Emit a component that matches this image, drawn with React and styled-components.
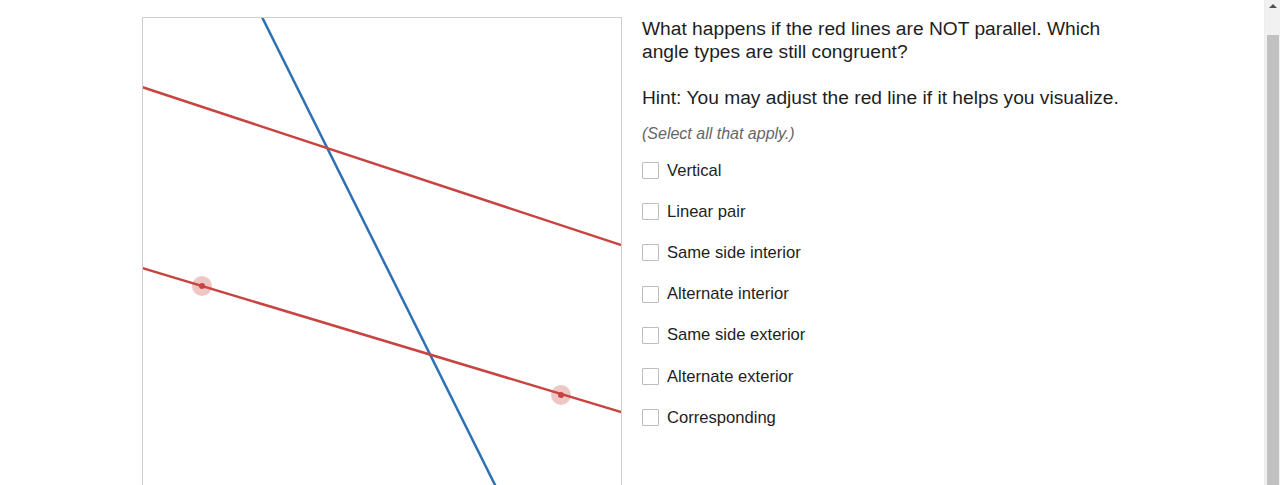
import React from 'react';
import styled, { createGlobalStyle } from 'styled-components';

const GlobalStyle = createGlobalStyle`
    html, body {
        margin: 0;
        padding: 0;
        background: #fff;
        overflow: hidden;
        height: 485px;
    }
    body {
        font-family: "Liberation Sans", Arial, sans-serif;
        color: #222;
    }
`;

const Page = styled.div`
    width: 1264px;
    height: 485px;
    overflow: hidden;
`;

const Container = styled.div`
    width: 980px;
    margin: 0 auto;
    padding-top: 17px;
    display: flex;
    align-items: flex-start;
    gap: 20px;
`;

const GraphBox = styled.div`
    width: 478px;
    height: 478px;
    border: 1px solid #cfcfcf;
    flex: none;
    overflow: hidden;

    svg {
        display: block;
    }
`;

const Side = styled.div`
    flex: 1;
`;

const Question = styled.p`
    margin: 0;
    font-size: 19.2px;
    line-height: 23px;
    color: #1e1e1e;
`;

const Hint = styled(Question)`
    margin-top: 23px;
`;

const Note = styled.p`
    margin: 15px 0 0;
    font-size: 16px;
    line-height: 20px;
    font-style: italic;
    color: #666;
`;

const Options = styled.ul`
    list-style: none;
    margin: 6px 0 0;
    padding: 0;
`;

const Option = styled.li`
    height: 41.2px;
    display: flex;
    align-items: center;
    gap: 8px;
    font-size: 16.6px;
    color: #1e1e1e;
`;

const Box = styled.span`
    width: 15px;
    height: 15px;
    border: 1px solid #bdbdbd;
    border-radius: 1px;
    background: #fff;
    flex: none;
`;

const Scrollbar = styled.div`
    position: fixed;
    top: 0;
    right: 0;
    width: 16px;
    height: 485px;
    background: #f1f1f1;
    border-left: 1px solid #ececec;
    box-sizing: border-box;
`;

const Arrow = styled.div`
    width: 0;
    height: 0;
    margin: 4px auto 0;
    border-left: 4px solid transparent;
    border-right: 4px solid transparent;
    border-bottom: 4px solid #505050;
`;

const Thumb = styled.div`
    position: absolute;
    top: 35px;
    left: 2px;
    width: 12px;
    bottom: 0;
    background: #c1c1c1;
`;

const RED = '#c74440';
const BLUE = '#2d70b3';

const Graph = () => (
    <GraphBox>
        <svg width="478" height="478" viewBox="0 0 478 478">
            <line x1="118.5" y1="-2" x2="359" y2="481" stroke={BLUE} strokeWidth="2.5" />
            <line x1="-2" y1="68.7" x2="480" y2="227.7" stroke={RED} strokeWidth="2.5" />
            <line x1="-2" y1="249.7" x2="480" y2="394.6" stroke={RED} strokeWidth="2.5" />
            <circle cx="59" cy="268" r="10" fill={RED} fillOpacity="0.3" />
            <circle cx="59" cy="268" r="3" fill={RED} />
            <circle cx="418" cy="377" r="10" fill={RED} fillOpacity="0.3" />
            <circle cx="418" cy="377" r="3" fill={RED} />
        </svg>
    </GraphBox>
);

const choices = [
    'Vertical',
    'Linear pair',
    'Same side interior',
    'Alternate interior',
    'Same side exterior',
    'Alternate exterior',
    'Corresponding',
];

export default function App() {
    return (
        <Page>
            <GlobalStyle />
            <Container>
                <Graph />
                <Side>
                    <Question>What happens if the red lines are NOT parallel. Which angle types are still congruent?</Question>
                    <Hint>Hint: You may adjust the red line if it helps you visualize.</Hint>
                    <Note>(Select all that apply.)</Note>
                    <Options>
                        {choices.map(c => (
                            <Option key={c}>
                                <Box />
                                {c}
                            </Option>
                        ))}
                    </Options>
                </Side>
            </Container>
            <Scrollbar>
                <Arrow />
                <Thumb />
            </Scrollbar>
        </Page>
    );
}
